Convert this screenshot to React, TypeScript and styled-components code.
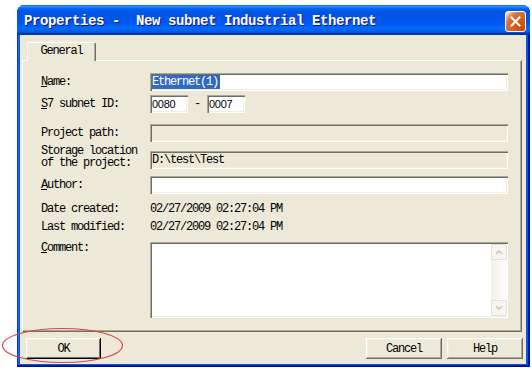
import React from "react";
import styled, { createGlobalStyle } from "styled-components";

const Global = createGlobalStyle`
  html, body { margin: 0; padding: 0; background: #fff; }
  body { width: 532px; height: 370px; overflow: hidden; position: relative; }
  #root { width: 532px; height: 370px; }
`;

const MONO = `"Liberation Mono", "Courier New", monospace`;

const Window = styled.div`
  margin: 5px 0 0 17px;
  width: 513px;
  height: 362px;
  display: flex;
  flex-direction: column;
  border-radius: 8px 8px 0 0;
  overflow: hidden;
  background: #0756e6;
  box-shadow: inset -1px -1px #00138c, inset 1px 0 #0831d9, inset -2px -2px #001ea0,
    inset 2px 0 #166aee;
`;

const TitleBar = styled.div`
  height: 30px;
  flex: none;
  display: flex;
  align-items: center;
  justify-content: space-between;
  padding: 0 4px 0 7px;
  box-sizing: border-box;
  background: linear-gradient(
    180deg,
    #0058ee 0%,
    #3593ff 4%,
    #288eff 6%,
    #127dff 8%,
    #036ffc 10%,
    #0262ee 14%,
    #0057e5 20%,
    #0054e3 24%,
    #0055eb 56%,
    #005bf5 66%,
    #026afe 76%,
    #0062ef 86%,
    #0052d6 92%,
    #0040ab 94%,
    #003092 100%
  );
`;

const Title = styled.div`
  color: #fff;
  font-family: ${MONO};
  font-weight: bold;
  font-size: 14px;
  letter-spacing: -0.4px;
  line-height: 16px;
  margin-top: 2px;
  white-space: pre;
  text-shadow: 1px 1px #0f1089;
`;

const CloseButton = styled.div`
  width: 21px;
  height: 21px;
  box-sizing: border-box;
  margin-top: 3px;
  border: 1px solid #fff;
  border-radius: 3px;
  display: flex;
  align-items: center;
  justify-content: center;
  background: radial-gradient(
    circle at 90% 90%,
    #cc4600 0%,
    #dc6527 55%,
    #cd7546 70%,
    #ffccb2 90%,
    #fff 100%
  );
`;

const Client = styled.div`
  flex: 1;
  margin: 0 4px 3px 3px;
  background: #ece9d8;
  display: flex;
  flex-direction: column;
  padding-top: 7px;
  box-sizing: border-box;
`;

const TabStrip = styled.div`
  display: flex;
  height: 18px;
  padding-left: 7px;
`;

const Tab = styled.div`
  position: relative;
  z-index: 1;
  width: 69px;
  height: 19px;
  box-sizing: border-box;
  background: #ece9d8;
  border-top: 1px solid #fff;
  border-left: 1px solid #fff;
  border-right: 1px solid #716f64;
  border-radius: 2px 2px 0 0;
  box-shadow: inset -1px 0 #aca899;
  font-family: ${MONO};
  font-size: 12px;
  letter-spacing: -1.2px;
  line-height: 17px;
  text-align: center;
  color: #000;
`;

const Panel = styled.div`
  margin: 0 4px 0 2px;
  height: 272px;
  box-sizing: border-box;
  border-top: 1px solid #fff;
  border-left: 1px solid #fff;
  border-right: 1px solid #716f64;
  border-bottom: 1px solid #716f64;
  box-shadow: inset -1px -1px #aca899;
  padding: 12px 0 0 18px;
  display: flex;
  flex-direction: column;
`;

const Row = styled.div<{ $h: number; $mt: number; $top?: boolean }>`
  display: grid;
  grid-template-columns: 109px 358px;
  height: ${(p) => p.$h}px;
  margin-top: ${(p) => p.$mt}px;
  align-items: ${(p) => (p.$top ? "start" : "center")};
`;

const Label = styled.div`
  font-family: ${MONO};
  font-size: 12px;
  letter-spacing: -1.2px;
  line-height: 12px;
  color: #000;
  white-space: pre;
  u { text-decoration: underline; text-underline-offset: 1px; }
`;

const Value = styled(Label)``;

const Field = styled.div<{ $w?: number; $h?: number; $disabled?: boolean; $end?: boolean }>`
  width: ${(p) => (p.$w ? `${p.$w}px` : "100%")};
  height: ${(p) => p.$h ?? 18}px;
  box-sizing: border-box;
  align-self: ${(p) => (p.$end ? "end" : "auto")};
  background: ${(p) => (p.$disabled ? "#ece9d8" : "#fff")};
  box-shadow: inset 1px 1px #aca899, inset 2px 2px #716f64, inset -1px -1px #fff,
    inset -2px -2px #f1efe2;
  padding: 2px 2px 2px 2px;
  display: flex;
  align-items: center;
  font-family: ${MONO};
  font-size: 12px;
  letter-spacing: -1.2px;
  color: #000;
  white-space: pre;
  overflow: hidden;
`;

const Selected = styled.span`
  background: #316ac5;
  color: #fff;
  line-height: 14px;
  padding: 0 2px 0 0;
`;

const NumText = styled.span`
  font-family: "Liberation Sans", Arial, sans-serif;
  font-size: 11px;
  letter-spacing: -0.3px;
  line-height: 14px;
`;

const IdGroup = styled.div`
  display: flex;
  align-items: center;
`;

const Dash = styled.div`
  width: 19px;
  text-align: center;
  font-family: ${MONO};
  font-size: 12px;
  line-height: 12px;
`;

const TextArea = styled(Field)`
  align-items: stretch;
  padding: 2px 1px 2px 2px;
`;

const TextBody = styled.div`
  flex: 1;
`;

const ScrollBar = styled.div`
  width: 16px;
  display: flex;
  flex-direction: column;
  justify-content: space-between;
  background: linear-gradient(90deg, #f3f1ea, #fdfdfa);
`;

const ScrollBtn = styled.div`
  height: 16px;
  box-sizing: border-box;
  border: 1px solid #e3e0d4;
  border-radius: 2px;
  background: #f6f5f0;
  display: flex;
  align-items: center;
  justify-content: center;
`;

const ButtonRow = styled.div`
  display: flex;
  margin-top: 6px;
  height: 21px;
  padding: 0 3px 0 6px;
  gap: 5px;
`;

const Spacer = styled.div`
  flex: 1;
`;

const Button = styled.div<{ $w: number; $default?: boolean }>`
  width: ${(p) => p.$w}px;
  height: 21px;
  box-sizing: border-box;
  background: #ece9d8;
  box-shadow: ${(p) =>
    p.$default
      ? "inset -1px -1px #000, inset 1px 1px #fff, inset -2px -2px #716f64, inset 2px 2px #f1efe2"
      : "inset -1px -1px #716f64, inset 1px 1px #fff, inset -2px -2px #aca899, inset 2px 2px #f1efe2"};
  display: flex;
  align-items: center;
  justify-content: center;
  font-family: ${MONO};
  font-size: 12px;
  letter-spacing: -1.2px;
  color: #000;
`;

const Annotation = styled.svg`
  position: absolute;
  left: 1px;
  top: 327px;
  pointer-events: none;
`;

const Chevron = ({ up }: { up?: boolean }) => (
  <svg width="8" height="6" viewBox="0 0 8 6">
    <path
      d={up ? "M1 5 L4 2 L7 5" : "M1 1 L4 4 L7 1"}
      fill="none"
      stroke="#c9c6b8"
      strokeWidth="1.6"
    />
  </svg>
);

export default function App() {
  return (
    <>
      <Global />
      <Window>
        <TitleBar>
          <Title>{"Properties -  New subnet Industrial Ethernet"}</Title>
          <CloseButton>
            <svg width="11" height="11" viewBox="0 0 11 11">
              <path d="M1.5 1.5 L9.5 9.5 M9.5 1.5 L1.5 9.5" stroke="#fff" strokeWidth="2" strokeLinecap="square" />
            </svg>
          </CloseButton>
        </TitleBar>
        <Client>
          <TabStrip>
            <Tab>General</Tab>
          </TabStrip>
          <Panel>
            <Row $h={18} $mt={0}>
              <Label>
                <u>N</u>ame:
              </Label>
              <Field>
                <Selected>Ethernet(1)</Selected>
              </Field>
            </Row>
            <Row $h={18} $mt={4}>
              <Label>
                <u>S</u>7 subnet ID:
              </Label>
              <IdGroup>
                <Field $w={38}>
                  <NumText>0080</NumText>
                </Field>
                <Dash>-</Dash>
                <Field $w={38}>
                  <NumText>0007</NumText>
                </Field>
              </IdGroup>
            </Row>
            <Row $h={18} $mt={11}>
              <Label>Project path:</Label>
              <Field $disabled />
            </Row>
            <Row $h={24} $mt={3} $top>
              <Label>{"Storage location\nof the project:"}</Label>
              <Field $disabled $end $h={18}>
                {"D:\\test\\Test"}
              </Field>
            </Row>
            <Row $h={18} $mt={7}>
              <Label>
                <u>A</u>uthor:
              </Label>
              <Field />
            </Row>
            <Row $h={12} $mt={9}>
              <Label>Date created:</Label>
              <Value>02/27/2009 02:27:04 PM</Value>
            </Row>
            <Row $h={12} $mt={6}>
              <Label>Last modified:</Label>
              <Value>02/27/2009 02:27:04 PM</Value>
            </Row>
            <Row $h={76} $mt={9} $top>
              <Label>
                <u>C</u>omment:
              </Label>
              <TextArea $h={76}>
                <TextBody />
                <ScrollBar>
                  <ScrollBtn>
                    <Chevron up />
                  </ScrollBtn>
                  <ScrollBtn>
                    <Chevron />
                  </ScrollBtn>
                </ScrollBar>
              </TextArea>
            </Row>
          </Panel>
          <ButtonRow>
            <Button $w={75} $default>
              OK
            </Button>
            <Spacer />
            <Button $w={76}>Cancel</Button>
            <Button $w={76}>Help</Button>
          </ButtonRow>
        </Client>
      </Window>
      <Annotation width="124" height="38" viewBox="0 0 124 38">
        <ellipse cx="61.5" cy="18.5" rx="60" ry="17" fill="none" stroke="#d94848" strokeWidth="1.2" />
      </Annotation>
    </>
  );
}
